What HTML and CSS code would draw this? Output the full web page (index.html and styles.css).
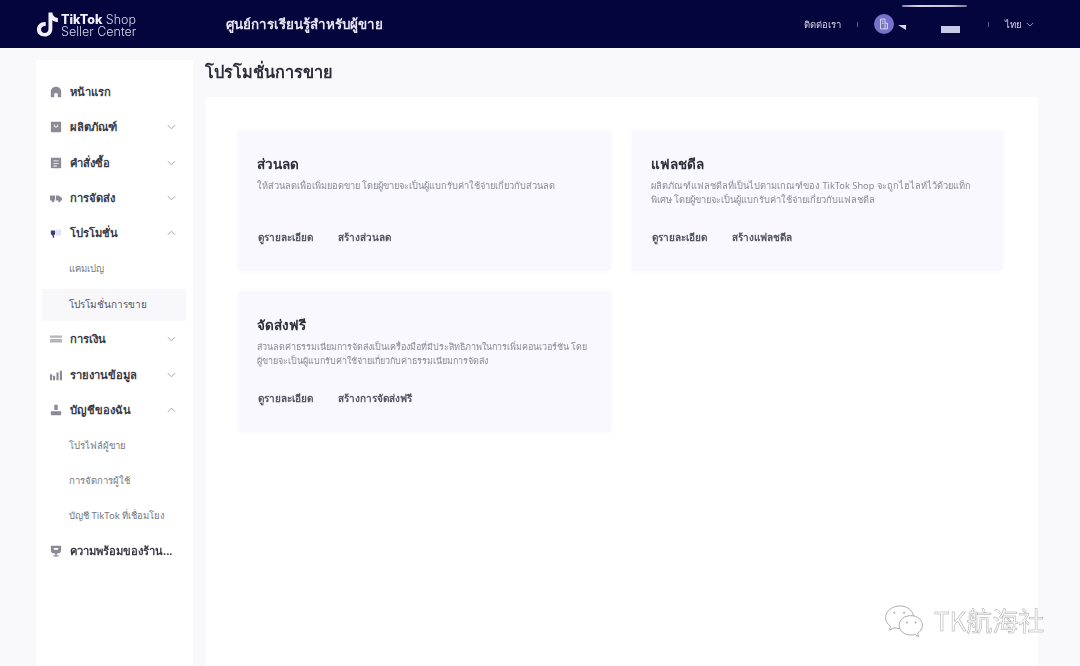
FILE: index.html
```html
<!DOCTYPE html>
<html lang="th">
<head>
<meta charset="utf-8">
<title>โปรโมชั่นการขาย</title>
<link rel="stylesheet" href="styles.css">
</head>
<body>
<header class="topbar">
  <div class="brand">
    <svg class="brand-mark" viewBox="0 0 26 28" width="24" height="27"><path d="M13.5 1h4.200c.3 3.500 2.400 5.600 6 6v4.300c-2.300 0-4.300-.7-6-1.900v9.100c0 5-3.700 8.500-8.300 8.500S1 24.300 1 19.500c0-5 4.200-8.800 9.500-8.200v4.500c-2.700-.6-5 1.100-5 3.700 0 2.200 1.700 3.800 3.800 3.800 2.300 0 4.200-1.700 4.200-4.300z" fill="#f1eff8"/></svg>
    <div class="brand-text">
      <div class="brand-line"><b>TikTok</b> Shop</div>
      <div class="brand-line">Seller Center</div>
    </div>
  </div>
  <div class="topbar-title">ศูนย์การเรียนรู้สำหรับผู้ขาย</div>
  <div class="topbar-right">
    <span class="contact">ติดต่อเรา</span>
    <span class="tick"></span>
    <span class="avatar">
      <svg viewBox="0 0 20 20" width="14" height="14" fill="none" stroke="#e8e6f8" stroke-width="1.200"><path d="M5 3h6.500v14H5zM11.500 9H15v8h-3.500M7 6h2.500M7 9h2.500"/></svg>
    </span>
    <span class="redact-tri"></span>
    <span class="redact-box"></span>
    <span class="tick tick-last"></span>
    <span class="lang">ไทย
      <svg viewBox="0 0 10 6" width="8" height="5" fill="none" stroke="#b9b8d2"><path d="M1 1l4 4 4-4"/></svg>
    </span>
  </div>
  <span class="redact-top"></span>
</header>

<div class="layout">
  <nav class="sidebar">
    <div class="nav-row nav-main">
      <svg class="nav-icon" viewBox="0 0 14 14"><path d="M1 13V6.500C1 3.500 3.500 1 7 1s6 2.500 6 5.500V13H9V8.500H5V13z"/></svg>
      <span class="nav-label">หน้าแรก</span>
    </div>
    <div class="nav-row nav-main">
      <svg class="nav-icon" viewBox="0 0 14 14"><path fill-rule="evenodd" d="M2 1h10a1 1 0 0 1 1 1v10a1 1 0 0 1-1 1H2a1 1 0 0 1-1-1V2a1 1 0 0 1 1-1zm2.500 3v2.500L7 8l2.500-1.500V4H8.500v1.800L7 6.700 5.500 5.800V4z"/></svg>
      <span class="nav-label">ผลิตภัณฑ์</span>
      <svg class="chev" viewBox="0 0 10 6"><path d="M1 1l4 4 4-4"/></svg>
    </div>
    <div class="nav-row nav-main">
      <svg class="nav-icon" viewBox="0 0 14 14"><path fill-rule="evenodd" d="M2 1h10a1 1 0 0 1 1 1v10a1 1 0 0 1-1 1H2a1 1 0 0 1-1-1V2a1 1 0 0 1 1-1zm2 3v1h6V4zm0 3v1h6V7zm0 3v1h4v-1z"/></svg>
      <span class="nav-label">คำสั่งซื้อ</span>
      <svg class="chev" viewBox="0 0 10 6"><path d="M1 1l4 4 4-4"/></svg>
    </div>
    <div class="nav-row nav-main">
      <svg class="nav-icon" viewBox="0 0 14 14"><path d="M0 4h6v6H0zM7 4h3l4 3v3H7z"/><circle cx="3.500" cy="10.500" r="1.500"/><circle cx="11" cy="10.500" r="1.500"/></svg>
      <span class="nav-label">การจัดส่ง</span>
      <svg class="chev" viewBox="0 0 10 6"><path d="M1 1l4 4 4-4"/></svg>
    </div>
    <div class="nav-row nav-main">
      <svg class="nav-icon nav-icon-active" viewBox="0 0 14 14"><path d="M1 4h5v5H4.500L5 12.500H3.500L2.500 9H1z"/><path d="M7 3h6v7H7z" fill="#e4e2f6"/></svg>
      <span class="nav-label">โปรโมชั่น</span>
      <svg class="chev" viewBox="0 0 10 6"><path d="M1 5l4-4 4 4"/></svg>
    </div>
    <div class="nav-row nav-sub"><span class="nav-sublabel">แคมเปญ</span></div>
    <div class="nav-row nav-sub nav-selected"><span class="nav-sublabel">โปรโมชั่นการขาย</span></div>
    <div class="nav-row nav-main">
      <svg class="nav-icon nav-icon-soft" viewBox="0 0 14 14"><path d="M0 3h14v2.500H0zM0 7h14v4H0z"/></svg>
      <span class="nav-label">การเงิน</span>
      <svg class="chev" viewBox="0 0 10 6"><path d="M1 1l4 4 4-4"/></svg>
    </div>
    <div class="nav-row nav-main">
      <svg class="nav-icon" viewBox="0 0 14 14"><path d="M0 6h2.500v7H0zM3.500 8H6v5H3.500zM7.500 4H10v9H7.500zM11.500 2H14v11h-2.500z"/></svg>
      <span class="nav-label">รายงานข้อมูล</span>
      <svg class="chev" viewBox="0 0 10 6"><path d="M1 1l4 4 4-4"/></svg>
    </div>
    <div class="nav-row nav-main">
      <svg class="nav-icon" viewBox="0 0 14 14"><path d="M5 1h4v6H5zM1 8.500h12V13H1z"/></svg>
      <span class="nav-label">บัญชีของฉัน</span>
      <svg class="chev" viewBox="0 0 10 6"><path d="M1 5l4-4 4 4"/></svg>
    </div>
    <div class="nav-row nav-sub"><span class="nav-sublabel">โปรไฟล์ผู้ขาย</span></div>
    <div class="nav-row nav-sub"><span class="nav-sublabel">การจัดการผู้ใช้</span></div>
    <div class="nav-row nav-sub"><span class="nav-sublabel">บัญชี TikTok ที่เชื่อมโยง</span></div>
    <div class="nav-row nav-main">
      <svg class="nav-icon" viewBox="0 0 14 14"><path fill-rule="evenodd" d="M1 1h12v4.500a4.500 4.500 0 0 1-4.500 4.500H8v2h2v1.500H4V12h2v-2h-.5A4.500 4.500 0 0 1 1 5.500zm3.500 2.500v2h5v-2z"/></svg>
      <span class="nav-label">ความพร้อมของร้าน...</span>
    </div>
  </nav>

  <main class="content">
    <h1 class="page-title">โปรโมชั่นการขาย</h1>
    <section class="panel">
      <article class="card">
        <h2 class="card-title">ส่วนลด</h2>
        <p class="card-desc">ให้ส่วนลดเพื่อเพิ่มยอดขาย โดยผู้ขายจะเป็นผู้แบกรับค่าใช้จ่ายเกี่ยวกับส่วนลด</p>
        <div class="card-actions"><a>ดูรายละเอียด</a><a>สร้างส่วนลด</a></div>
      </article>
      <article class="card">
        <h2 class="card-title">แฟลชดีล</h2>
        <p class="card-desc">ผลิตภัณฑ์แฟลชดีลที่เป็นไปตามเกณฑ์ของ TikTok Shop จะถูกไฮไลท์ไว้ด้วยแท็ก<br>พิเศษ โดยผู้ขายจะเป็นผู้แบกรับค่าใช้จ่ายเกี่ยวกับแฟลชดีล</p>
        <div class="card-actions"><a>ดูรายละเอียด</a><a>สร้างแฟลชดีล</a></div>
      </article>
      <article class="card">
        <h2 class="card-title">จัดส่งฟรี</h2>
        <p class="card-desc card-desc-tight">ส่วนลดค่าธรรมเนียมการจัดส่งเป็นเครื่องมือที่มีประสิทธิภาพในการเพิ่มคอนเวอร์ชัน โดย<br>ผู้ขายจะเป็นผู้แบกรับค่าใช้จ่ายเกี่ยวกับค่าธรรมเนียมการจัดส่ง</p>
        <div class="card-actions"><a>ดูรายละเอียด</a><a>สร้างการจัดส่งฟรี</a></div>
      </article>
    </section>
  </main>
</div>

<div class="watermark">
  <svg viewBox="0 0 44 34" width="44" height="33" fill="#fff" stroke="#a9a9a9" stroke-width="1">
    <path d="M17 2C9 2 2 7 2 14c0 4 2.500 7 5 9l-1 4 5-2.500c2 .6 4 .8 6 .8 8 0 14-5 14-11.300S25 2 17 2z"/>
    <path d="M28 12c-7 0-12 4.500-12 10s5 10 12 10c1.500 0 3-.2 4-.6l4 2.300-1-3.500c3-2 5-5 5-8.200 0-5.500-5-10-12-10z"/>
    <circle cx="11" cy="9" r=".7"/><circle cx="21" cy="9" r=".7"/><circle cx="24" cy="19" r=".7"/><circle cx="33" cy="19" r=".7"/>
  </svg>
  <span class="watermark-text">TK航海社</span>
</div>
</body>
</html>
```

FILE: styles.css
```css
* { box-sizing: border-box; }
html, body { margin: 0; height: 100%; }
body {
  width: 1080px;
  height: 666px;
  overflow: hidden;
  position: relative;
  background: #f9f9fc;
  font-family: "Noto Sans", "Open Sans", "DejaVu Sans", sans-serif;
  color: #2c2c3c;
}
.topbar {
  height: 48px;
  background: #05053e;
  display: flex;
  align-items: center;
  padding-left: 36px;
  position: relative;
  filter: blur(0.35px);
}
.brand { display: flex; align-items: center; gap: 1px; width: 190px; }
.brand-mark { flex: none; }
.brand-text { padding-top: 4px; color: #d8d6ea; font-family: "Inter", "Liberation Sans", sans-serif; font-size: 12.500px; line-height: 12px; font-weight: 300; white-space: nowrap; }
.brand-line b { font-weight: 800; color: #f2f1fa; }
.topbar-title { color: #e6e5f2; font-size: 13.400px; font-weight: 600; }
.topbar-right {
  margin-left: auto;
  display: flex;
  align-items: center;
  padding-right: 46px;
  color: #d9d8ea;
  font-size: 9.500px;
  font-weight: 500;
}
.tick { width: 1px; height: 5px; background: #5e5d86; margin: 0 16px; }
.tick-last { margin: 0 16px 0 28px; }
.avatar { width: 20px; height: 20px; border-radius: 50%; background: #7672c8; display: flex; align-items: center; justify-content: center; }
.redact-tri { width: 0; height: 0; margin: 7px 0 0 4px; border-left: 8px solid transparent; border-top: 5px solid #d8d8ee; }
.redact-box { width: 19px; height: 7px; margin: 11px 0 0 35px; background: #c9c9e8; }
.lang { display: flex; align-items: center; gap: 4px; }
.redact-top { position: absolute; left: 902px; top: 5px; width: 65px; height: 2px; border-radius: 2px; background: linear-gradient(90deg, #8e84ab, #d9d0e6 25%, #c9c3dc 75%, #77729f); }

.layout { display: flex; height: 618px; padding: 12px 42px 0 36px; filter: blur(0.35px); }
.sidebar { width: 157px; flex: none; background: #fff; padding-top: 14.500px; }
.nav-row { height: 35.300px; display: flex; align-items: center; }
.nav-main { padding: 0 17px 0 14px; }
.nav-icon { width: 12px; height: 12px; fill: #8b8b95; flex: none; margin-right: 8px; }
.nav-icon-active { fill: #3c3c78; }
.nav-icon-soft { fill: #b4b4bc; }
.nav-label { font-size: 11.200px; font-weight: 700; color: #3a3a46; white-space: nowrap; flex: 1; }
.chev { width: 9px; height: 6px; fill: none; stroke: #9a9aa4; flex: none; }
.nav-sub { padding-left: 33px; }
.nav-sublabel { font-size: 9.500px; color: #77777f; white-space: nowrap; }
.nav-selected { background: #f8f8fa; height: 31.300px; margin: 3px 7px 1px 6px; padding-left: 27px; }
.nav-selected .nav-sublabel { color: #55556a; font-size: 10px; }

.content { flex: 1; padding-left: 12px; min-width: 0; display: flex; flex-direction: column; }
.page-title { margin: 0; height: 37px; line-height: 24px; font-size: 16.300px; font-weight: 700; color: #2e2e3a; }
.panel {
  flex: 1;
  margin-left: 1px;
  background: #fff;
  padding: 34px 0 0 32px;
  display: grid;
  grid-template-columns: 373px 371px;
  grid-auto-rows: 140px;
  gap: 21px;
  align-content: start;
}
.card { background: #f8f8fe; padding: 24px 10px 0 19px; display: flex; flex-direction: column; box-shadow: 0 0 6px #f8f8fe; }
.card-title { margin: 0; font-size: 13.500px; line-height: 18px; font-weight: 700; color: #2e2e3a; }
.card-desc { margin: 6px 0 0; font-size: 9.250px; line-height: 14px; color: #8a8a96; height: 36px; white-space: nowrap; }
.card-desc-tight { font-size: 9px; }
.card-actions { display: flex; gap: 25px; margin: 15px 0 0 1px; font-size: 10px; line-height: 14px; font-weight: 600; color: #555562; }

.watermark { position: absolute; left: 883px; top: 603px; display: flex; align-items: center; gap: 7px; }
.watermark-text { font-family: "Noto Sans CJK SC", sans-serif; font-size: 26px; line-height: 34px; color: #fff; -webkit-text-stroke: 0.500px #a8a8a8; }
```
